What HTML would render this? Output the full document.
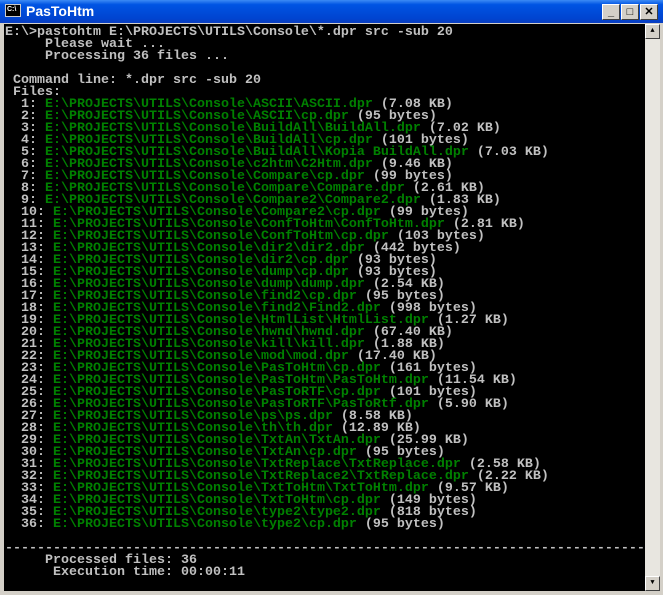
<!DOCTYPE html>
<html><head><style>
body{margin:0;width:663px;height:595px;overflow:hidden;background:#0831d9;font-family:"Liberation Mono",monospace}
.tb{position:absolute;left:0;top:0;width:663px;height:23px;background:linear-gradient(#3d8bf5,#0054e3 20%,#0044d0 80%,#0a3ec0);}
.tt{position:absolute;left:26px;top:3px;color:#fff;font:bold 14px "Liberation Sans",sans-serif;}
.ic{position:absolute;left:5px;top:4px;width:16px;height:13px;background:#000;border:1px solid #ccc;box-sizing:border-box;color:#fff;font:bold 7px "Liberation Sans";line-height:10px;padding-left:1px}
.btn{position:absolute;top:4px;width:18px;height:16px;background:#d4d0c8;border:1px solid;border-color:#fff #404040 #404040 #fff;box-sizing:border-box;font:bold 11px "Liberation Sans";text-align:center;line-height:14px;color:#000}
.frame{position:absolute;left:0;top:23px;width:663px;height:572px;background:#d4d0c8}
.con{position:absolute;left:4px;top:24px;width:641px;height:567px;background:#000;overflow:hidden}
.sb{position:absolute;left:645px;top:24px;width:15px;height:567px;background:#e8e6e0}
.sbb{position:absolute;left:645px;width:15px;height:15px;background:#d4d0c8;border:1px solid;border-color:#fff #404040 #404040 #fff;box-sizing:border-box;font-size:7px;text-align:center;line-height:13px}
pre{margin:0;position:absolute;left:1px;top:3px;font:bold 13.33px/12px "Liberation Mono",monospace;color:#c0c0c0;letter-spacing:0}
g{color:#008000}
</style></head><body>
<div class="tb"></div><div class="ic">C:\</div><div class="tt">PasToHtm</div>
<div class="btn" style="left:602px">_</div><div class="btn" style="left:621px">□</div><div class="btn" style="left:640px">✕</div>
<div class="frame"></div>
<div class="con"><pre>E:\>pastohtm E:\PROJECTS\UTILS\Console\*.dpr src -sub 20
     Please wait ...
     Processing 36 files ...

 Command line: *.dpr src -sub 20
 Files:
  1: <g>E:\PROJECTS\UTILS\Console\ASCII\ASCII.dpr</g> (7.08 KB)
  2: <g>E:\PROJECTS\UTILS\Console\ASCII\cp.dpr</g> (95 bytes)
  3: <g>E:\PROJECTS\UTILS\Console\BuildAll\BuildAll.dpr</g> (7.02 KB)
  4: <g>E:\PROJECTS\UTILS\Console\BuildAll\cp.dpr</g> (101 bytes)
  5: <g>E:\PROJECTS\UTILS\Console\BuildAll\Kopia BuildAll.dpr</g> (7.03 KB)
  6: <g>E:\PROJECTS\UTILS\Console\c2htm\C2Htm.dpr</g> (9.46 KB)
  7: <g>E:\PROJECTS\UTILS\Console\Compare\cp.dpr</g> (99 bytes)
  8: <g>E:\PROJECTS\UTILS\Console\Compare\Compare.dpr</g> (2.61 KB)
  9: <g>E:\PROJECTS\UTILS\Console\Compare2\Compare2.dpr</g> (1.83 KB)
  10: <g>E:\PROJECTS\UTILS\Console\Compare2\cp.dpr</g> (99 bytes)
  11: <g>E:\PROJECTS\UTILS\Console\ConfToHtm\ConfToHtm.dpr</g> (2.81 KB)
  12: <g>E:\PROJECTS\UTILS\Console\ConfToHtm\cp.dpr</g> (103 bytes)
  13: <g>E:\PROJECTS\UTILS\Console\dir2\dir2.dpr</g> (442 bytes)
  14: <g>E:\PROJECTS\UTILS\Console\dir2\cp.dpr</g> (93 bytes)
  15: <g>E:\PROJECTS\UTILS\Console\dump\cp.dpr</g> (93 bytes)
  16: <g>E:\PROJECTS\UTILS\Console\dump\dump.dpr</g> (2.54 KB)
  17: <g>E:\PROJECTS\UTILS\Console\find2\cp.dpr</g> (95 bytes)
  18: <g>E:\PROJECTS\UTILS\Console\find2\Find2.dpr</g> (998 bytes)
  19: <g>E:\PROJECTS\UTILS\Console\HtmlList\HtmlList.dpr</g> (1.27 KB)
  20: <g>E:\PROJECTS\UTILS\Console\hwnd\hwnd.dpr</g> (67.40 KB)
  21: <g>E:\PROJECTS\UTILS\Console\kill\kill.dpr</g> (1.88 KB)
  22: <g>E:\PROJECTS\UTILS\Console\mod\mod.dpr</g> (17.40 KB)
  23: <g>E:\PROJECTS\UTILS\Console\PasToHtm\cp.dpr</g> (161 bytes)
  24: <g>E:\PROJECTS\UTILS\Console\PasToHtm\PasToHtm.dpr</g> (11.54 KB)
  25: <g>E:\PROJECTS\UTILS\Console\PasToRTF\cp.dpr</g> (101 bytes)
  26: <g>E:\PROJECTS\UTILS\Console\PasToRTF\PasToRtf.dpr</g> (5.90 KB)
  27: <g>E:\PROJECTS\UTILS\Console\ps\ps.dpr</g> (8.58 KB)
  28: <g>E:\PROJECTS\UTILS\Console\th\th.dpr</g> (12.89 KB)
  29: <g>E:\PROJECTS\UTILS\Console\TxtAn\TxtAn.dpr</g> (25.99 KB)
  30: <g>E:\PROJECTS\UTILS\Console\TxtAn\cp.dpr</g> (95 bytes)
  31: <g>E:\PROJECTS\UTILS\Console\TxtReplace\TxtReplace.dpr</g> (2.58 KB)
  32: <g>E:\PROJECTS\UTILS\Console\TxtReplace2\TxtReplace.dpr</g> (2.22 KB)
  33: <g>E:\PROJECTS\UTILS\Console\TxtToHtm\TxtToHtm.dpr</g> (9.57 KB)
  34: <g>E:\PROJECTS\UTILS\Console\TxtToHtm\cp.dpr</g> (149 bytes)
  35: <g>E:\PROJECTS\UTILS\Console\type2\type2.dpr</g> (818 bytes)
  36: <g>E:\PROJECTS\UTILS\Console\type2\cp.dpr</g> (95 bytes)

--------------------------------------------------------------------------------
     Processed files: 36
      Execution time: 00:00:11
</pre></div>
<div class="sb"></div>
<div class="sbb" style="top:24px">▲</div>
<div class="sbb" style="top:576px">▼</div>
</body></html>
